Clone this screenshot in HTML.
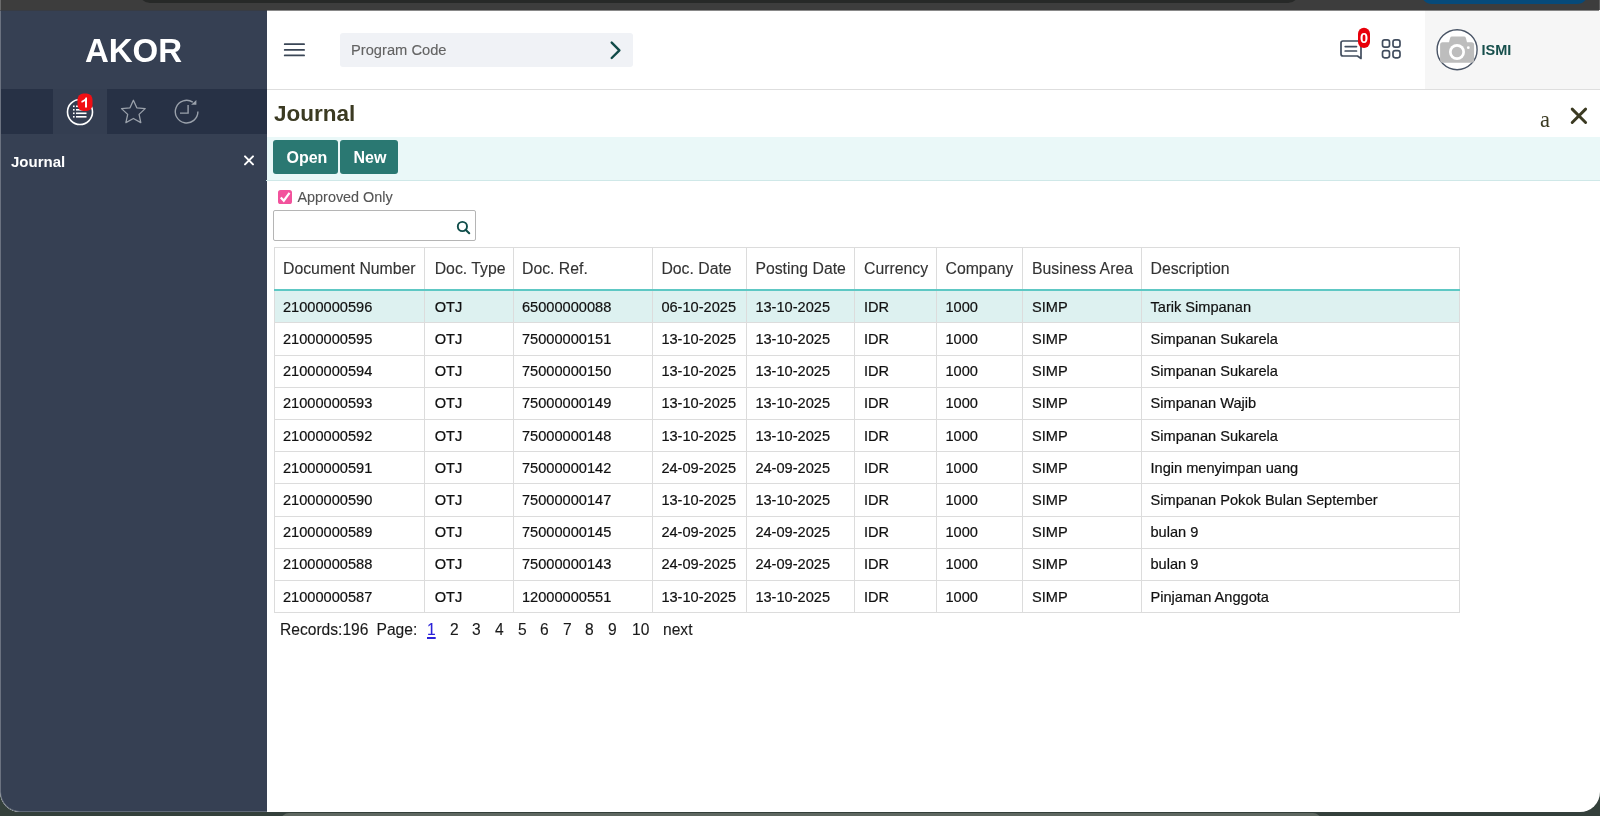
<!DOCTYPE html>
<html><head><meta charset="utf-8">
<style>
*{box-sizing:border-box;margin:0;padding:0}
html,body{width:1600px;height:816px;overflow:hidden;background:#34403b;font-family:"Liberation Sans",sans-serif}
div,svg{position:absolute}
.t{white-space:nowrap;line-height:1}
.s{-webkit-text-stroke:0.2px currentColor}
.s2{-webkit-text-stroke:0.12px currentColor}
svg text{font-family:"Liberation Sans",sans-serif}
</style></head><body>

<div style="left:281px;top:813px;width:1040px;height:10px;background:#5e6760;border-radius:8px 8px 0 0"></div>
<div style="left:0;top:0;width:1600px;height:11px;background:#3d3d3d"></div>
<div style="left:139px;top:-12px;width:1160px;height:15px;background:#272928;border-radius:0 0 11px 11px"></div>
<div style="left:1421px;top:-11.5px;width:167px;height:15px;background:#064a7a;border-radius:0 0 11px 11px"></div>
<div style="left:1599px;top:0;width:1px;height:11px;background:#5e5e5e"></div>
<div style="left:0;top:0;width:1px;height:11px;background:#6a6a6a"></div>
<div id="win" style="left:0;top:10px;width:1600px;height:802px;background:#fff;border-radius:0 0 20px 20px;overflow:hidden;will-change:transform">
<div style="left:0;top:0;width:267px;height:802px;background:#364053;border-left:1px solid #6b7280;border-bottom:1px solid #5f6877;border-radius:0 0 0 20px"></div>
<div class="t" style="left:0px;top:24.37px;color:#fff;font-size:33px;font-weight:bold;width:267px;text-align:center;">AKOR</div>
<div style="left:1px;top:79px;width:266px;height:45px;background:#273145"></div>
<div style="left:53px;top:79px;width:54px;height:45px;background:#343e51"></div>
<svg style="left:60px;top:80px" width="40" height="44" viewBox="0 0 40 44">
<circle cx="20" cy="22" r="12.5" fill="none" stroke="#fff" stroke-width="1.6"/>
<rect x="13" y="15.5" width="1.6" height="1.6" fill="#fff"/><rect x="16" y="15.5" width="10.5" height="1.6" fill="#fff"/>
<rect x="13" y="19" width="1.6" height="1.6" fill="#fff"/><rect x="16" y="19" width="10.5" height="1.6" fill="#fff"/>
<rect x="13" y="22.5" width="1.6" height="1.6" fill="#fff"/><rect x="16" y="22.5" width="10.5" height="1.6" fill="#fff"/>
<rect x="13" y="26" width="1.6" height="1.6" fill="#fff"/><rect x="16" y="26" width="10.5" height="1.6" fill="#fff"/>
<rect x="17.5" y="3.5" width="15" height="17.5" rx="6" fill="#f00f14"/>
<path d="M21.4 10.9 C23.6 10.3 25 9.3 25.6 7.6 H27 V17.6 H25 V10.9 C24.2 11.8 22.8 12.4 21.4 12.6 Z" fill="#fff"/>
</svg>
<svg style="left:119px;top:87px" width="28" height="28" viewBox="0 0 28 28">
<path d="M14.4 3.3 L17.8 10.8 L26.2 11.6 L20.1 17.4 L21.8 25.6 L14.4 21.5 L6.9 25.6 L8.7 17.4 L2.5 11.6 L11 10.8 Z" fill="none" stroke="#9aa1ab" stroke-width="1.3" stroke-linejoin="round"/>
</svg>
<svg style="left:172px;top:87px" width="30" height="30" viewBox="0 0 30 30">
<path d="M25.9 14.6 A11.3 11.3 0 1 1 20.8 5.2" fill="none" stroke="#9aa1ab" stroke-width="1.4"/>
<path d="M19.1 7.8 L24.4 2.9 L24.4 7.8 Z" fill="#9aa1ab"/>
<path d="M16.1 8 V16.1 H8" fill="none" stroke="#9aa1ab" stroke-width="1.4"/>
</svg>
<div class="t" style="left:11px;top:144.30px;color:#fff;font-size:15px;font-weight:bold;">Journal</div>
<svg style="left:243px;top:144px" width="12" height="12" viewBox="0 0 12 12"><path d="M2 2.4 L10 10.4 M10 2.4 L2 10.4" stroke="#fff" stroke-width="2" stroke-linecap="round"/></svg>
<div style="left:267px;top:79px;width:1333px;height:1px;background:#dedede"></div>
<div style="left:1425px;top:0;width:175px;height:79px;background:#f6f6f6"></div>
<svg style="left:283px;top:32px" width="24" height="16" viewBox="0 0 24 16">
<path d="M1.7 2.2 H21.1 M1.7 7.9 H21.1 M1.7 13.4 H21.1" stroke="#3a4656" stroke-width="1.75" stroke-linecap="round"/></svg>
<div style="left:340px;top:23px;width:293px;height:34px;background:#f0f2f6;border-radius:3px"></div>
<div class="t s2" style="left:351px;top:32.86px;color:#636363;font-size:14.7px;">Program Code</div>
<svg style="left:607px;top:30px" width="16" height="20" viewBox="0 0 16 20">
<path d="M4.7 2.6 L12.4 10.3 L4.7 18" fill="none" stroke="#114a48" stroke-width="2.4" stroke-linecap="round" stroke-linejoin="round"/></svg>
<svg style="left:1338px;top:28px" width="26" height="24" viewBox="0 0 26 24">
<path d="M5 3 H21 A2 2 0 0 1 23 5 V20.5 L19.5 18 H5 A2 2 0 0 1 3 16 V5 A2 2 0 0 1 5 3 Z" fill="none" stroke="#414d5e" stroke-width="1.7" stroke-linejoin="round"/>
<path d="M7.2 8.6 H18.5 M7.2 13 H18.5" stroke="#414d5e" stroke-width="1.7" stroke-linecap="round"/></svg>
<svg style="left:1357px;top:17px" width="14" height="22" viewBox="0 0 14 22">
<rect x="1" y="0.7" width="12" height="20.3" rx="6" fill="#e8000a"/>
<text x="7" y="16" font-weight="bold" font-size="14.5" fill="#fff" text-anchor="middle">0</text></svg>
<svg style="left:1380px;top:28px" width="22" height="22" viewBox="0 0 22 22">
<rect x="2.5" y="1.9" width="7" height="7.2" rx="2.2" fill="none" stroke="#414d5e" stroke-width="1.7"/>
<rect x="13" y="1.9" width="7" height="7.2" rx="2.2" fill="none" stroke="#414d5e" stroke-width="1.7"/>
<rect x="2.5" y="12.6" width="7" height="7.2" rx="2.2" fill="none" stroke="#414d5e" stroke-width="1.7"/>
<rect x="13" y="12.6" width="7" height="7.2" rx="2.2" fill="none" stroke="#414d5e" stroke-width="1.7"/></svg>
<svg style="left:1435px;top:18px" width="44" height="44" viewBox="0 0 44 44">
<circle cx="22.1" cy="21.7" r="20" fill="#fff" stroke="#4a5566" stroke-width="1.4"/>
<path d="M17 8.6 H29 A2 2 0 0 1 30.9 10 L32 14.2 H36.6 A2.5 2.5 0 0 1 39.1 16.7 V32.2 A2.5 2.5 0 0 1 36.6 34.7 H7.6 A2.5 2.5 0 0 1 5.1 32.2 V16.7 A2.5 2.5 0 0 1 7.6 14.2 H14 L15.1 10 A2 2 0 0 1 17 8.6 Z" fill="#bdbdbd"/>
<circle cx="22" cy="24" r="8" fill="#fff"/><circle cx="22" cy="24" r="5.3" fill="#bdbdbd"/>
<circle cx="33.3" cy="19.7" r="1.4" fill="#fff"/></svg>
<div class="t" style="left:1481.5px;top:32.93px;color:#174f4c;font-size:14.5px;font-weight:bold;">ISMI</div>
<div class="t" style="left:274px;top:93.45px;color:#3b3a22;font-size:22.5px;font-weight:bold;">Journal</div>
<div class="t" style="left:1540px;top:99.16px;color:#3b3a22;font-size:22.5px;font-family:'Liberation Serif',serif;">a</div>
<svg style="left:1568px;top:95px" width="22" height="22" viewBox="0 0 22 22">
<path d="M4.2 4.1 L17.6 17.5 M17.6 4.1 L4.2 17.5" stroke="#3b3a22" stroke-width="2.9" stroke-linecap="round"/></svg>
<div style="left:267px;top:127px;width:1333px;height:43px;background:#eaf8f8"></div>
<div style="left:266px;top:170px;width:1334px;height:1px;background:#cfe8e8"></div>
<div style="left:273px;top:130px;width:64.5px;height:34px;background:#2a7872;border-radius:3px"></div>
<div style="left:340px;top:130px;width:57.6px;height:34px;background:#2a7872;border-radius:3px"></div>
<div class="t" style="left:286.5px;top:140.06px;color:#fff;font-size:16px;font-weight:bold;">Open</div>
<div class="t" style="left:353.5px;top:140.06px;color:#fff;font-size:16px;font-weight:bold;">New</div>
<svg style="left:277px;top:179px" width="16" height="16" viewBox="0 0 16 16">
<rect x="1" y="1" width="14" height="14" rx="2.6" fill="#f2529c"/>
<path d="M3.8 8.4 L6.8 11.7 L12.5 3.8" fill="none" stroke="#fff" stroke-width="2.2"/></svg>
<div class="t s2" style="left:297.5px;top:179.81px;color:#555;font-size:14.4px;">Approved Only</div>
<div style="left:273px;top:200px;width:203px;height:30.5px;border:1px solid #b5b5b5;border-radius:2px;background:#fff"></div>
<svg style="left:455px;top:209px" width="18" height="18" viewBox="0 0 18 18">
<circle cx="7.4" cy="7.5" r="4.6" fill="none" stroke="#0f4d4a" stroke-width="1.9"/>
<path d="M10.6 10.8 L14.2 14.2" stroke="#0f4d4a" stroke-width="2.1" stroke-linecap="round"/></svg>
<div style="left:274px;top:281px;width:1186px;height:31px;background:#ddf1f0"></div>
<div style="left:274px;top:237px;width:1186px;height:1px;background:#dcdcdc"></div>
<div style="left:274px;top:312px;width:1186px;height:1px;background:#dcdcdc"></div>
<div style="left:274px;top:345px;width:1186px;height:1px;background:#dcdcdc"></div>
<div style="left:274px;top:377px;width:1186px;height:1px;background:#dcdcdc"></div>
<div style="left:274px;top:409px;width:1186px;height:1px;background:#dcdcdc"></div>
<div style="left:274px;top:441px;width:1186px;height:1px;background:#dcdcdc"></div>
<div style="left:274px;top:473px;width:1186px;height:1px;background:#dcdcdc"></div>
<div style="left:274px;top:506px;width:1186px;height:1px;background:#dcdcdc"></div>
<div style="left:274px;top:538px;width:1186px;height:1px;background:#dcdcdc"></div>
<div style="left:274px;top:570px;width:1186px;height:1px;background:#dcdcdc"></div>
<div style="left:274px;top:602px;width:1186px;height:1px;background:#dcdcdc"></div>
<div style="left:274px;top:237px;width:1px;height:366px;background:#dcdcdc"></div>
<div style="left:424px;top:237px;width:1px;height:366px;background:#dcdcdc"></div>
<div style="left:513px;top:237px;width:1px;height:366px;background:#dcdcdc"></div>
<div style="left:652px;top:237px;width:1px;height:366px;background:#dcdcdc"></div>
<div style="left:746px;top:237px;width:1px;height:366px;background:#dcdcdc"></div>
<div style="left:854px;top:237px;width:1px;height:366px;background:#dcdcdc"></div>
<div style="left:936px;top:237px;width:1px;height:366px;background:#dcdcdc"></div>
<div style="left:1022px;top:237px;width:1px;height:366px;background:#dcdcdc"></div>
<div style="left:1141px;top:237px;width:1px;height:366px;background:#dcdcdc"></div>
<div style="left:1459px;top:237px;width:1px;height:366px;background:#dcdcdc"></div>
<div style="left:274px;top:279px;width:1186px;height:2px;background:#5ec8c4"></div>
<div class="t s2" style="left:283px;top:251.23px;color:#333;font-size:15.8px;">Document Number</div>
<div class="t s2" style="left:434.7px;top:251.23px;color:#333;font-size:15.8px;">Doc. Type</div>
<div class="t s2" style="left:522px;top:251.23px;color:#333;font-size:15.8px;">Doc. Ref.</div>
<div class="t s2" style="left:661.4px;top:251.23px;color:#333;font-size:15.8px;">Doc. Date</div>
<div class="t s2" style="left:755.4px;top:251.23px;color:#333;font-size:15.8px;">Posting Date</div>
<div class="t s2" style="left:864px;top:251.23px;color:#333;font-size:15.8px;">Currency</div>
<div class="t s2" style="left:945.5px;top:251.23px;color:#333;font-size:15.8px;">Company</div>
<div class="t s2" style="left:1032px;top:251.23px;color:#333;font-size:15.8px;">Business Area</div>
<div class="t s2" style="left:1150.5px;top:251.23px;color:#333;font-size:15.8px;">Description</div>
<div class="t s" style="left:283px;top:289.64px;color:#111;font-size:14.6px;">21000000596</div>
<div class="t s" style="left:434.7px;top:289.64px;color:#111;font-size:14.6px;">OTJ</div>
<div class="t s" style="left:522px;top:289.64px;color:#111;font-size:14.6px;">65000000088</div>
<div class="t s" style="left:661.4px;top:289.64px;color:#111;font-size:14.6px;">06-10-2025</div>
<div class="t s" style="left:755.4px;top:289.64px;color:#111;font-size:14.6px;">13-10-2025</div>
<div class="t s" style="left:864px;top:289.64px;color:#111;font-size:14.6px;">IDR</div>
<div class="t s" style="left:945.5px;top:289.64px;color:#111;font-size:14.6px;">1000</div>
<div class="t s" style="left:1032px;top:289.64px;color:#111;font-size:14.6px;">SIMP</div>
<div class="t s" style="left:1150.5px;top:289.64px;color:#111;font-size:14.6px;">Tarik Simpanan</div>
<div class="t s" style="left:283px;top:321.64px;color:#111;font-size:14.6px;">21000000595</div>
<div class="t s" style="left:434.7px;top:321.64px;color:#111;font-size:14.6px;">OTJ</div>
<div class="t s" style="left:522px;top:321.64px;color:#111;font-size:14.6px;">75000000151</div>
<div class="t s" style="left:661.4px;top:321.64px;color:#111;font-size:14.6px;">13-10-2025</div>
<div class="t s" style="left:755.4px;top:321.64px;color:#111;font-size:14.6px;">13-10-2025</div>
<div class="t s" style="left:864px;top:321.64px;color:#111;font-size:14.6px;">IDR</div>
<div class="t s" style="left:945.5px;top:321.64px;color:#111;font-size:14.6px;">1000</div>
<div class="t s" style="left:1032px;top:321.64px;color:#111;font-size:14.6px;">SIMP</div>
<div class="t s" style="left:1150.5px;top:321.64px;color:#111;font-size:14.6px;">Simpanan Sukarela</div>
<div class="t s" style="left:283px;top:354.14px;color:#111;font-size:14.6px;">21000000594</div>
<div class="t s" style="left:434.7px;top:354.14px;color:#111;font-size:14.6px;">OTJ</div>
<div class="t s" style="left:522px;top:354.14px;color:#111;font-size:14.6px;">75000000150</div>
<div class="t s" style="left:661.4px;top:354.14px;color:#111;font-size:14.6px;">13-10-2025</div>
<div class="t s" style="left:755.4px;top:354.14px;color:#111;font-size:14.6px;">13-10-2025</div>
<div class="t s" style="left:864px;top:354.14px;color:#111;font-size:14.6px;">IDR</div>
<div class="t s" style="left:945.5px;top:354.14px;color:#111;font-size:14.6px;">1000</div>
<div class="t s" style="left:1032px;top:354.14px;color:#111;font-size:14.6px;">SIMP</div>
<div class="t s" style="left:1150.5px;top:354.14px;color:#111;font-size:14.6px;">Simpanan Sukarela</div>
<div class="t s" style="left:283px;top:386.14px;color:#111;font-size:14.6px;">21000000593</div>
<div class="t s" style="left:434.7px;top:386.14px;color:#111;font-size:14.6px;">OTJ</div>
<div class="t s" style="left:522px;top:386.14px;color:#111;font-size:14.6px;">75000000149</div>
<div class="t s" style="left:661.4px;top:386.14px;color:#111;font-size:14.6px;">13-10-2025</div>
<div class="t s" style="left:755.4px;top:386.14px;color:#111;font-size:14.6px;">13-10-2025</div>
<div class="t s" style="left:864px;top:386.14px;color:#111;font-size:14.6px;">IDR</div>
<div class="t s" style="left:945.5px;top:386.14px;color:#111;font-size:14.6px;">1000</div>
<div class="t s" style="left:1032px;top:386.14px;color:#111;font-size:14.6px;">SIMP</div>
<div class="t s" style="left:1150.5px;top:386.14px;color:#111;font-size:14.6px;">Simpanan Wajib</div>
<div class="t s" style="left:283px;top:418.64px;color:#111;font-size:14.6px;">21000000592</div>
<div class="t s" style="left:434.7px;top:418.64px;color:#111;font-size:14.6px;">OTJ</div>
<div class="t s" style="left:522px;top:418.64px;color:#111;font-size:14.6px;">75000000148</div>
<div class="t s" style="left:661.4px;top:418.64px;color:#111;font-size:14.6px;">13-10-2025</div>
<div class="t s" style="left:755.4px;top:418.64px;color:#111;font-size:14.6px;">13-10-2025</div>
<div class="t s" style="left:864px;top:418.64px;color:#111;font-size:14.6px;">IDR</div>
<div class="t s" style="left:945.5px;top:418.64px;color:#111;font-size:14.6px;">1000</div>
<div class="t s" style="left:1032px;top:418.64px;color:#111;font-size:14.6px;">SIMP</div>
<div class="t s" style="left:1150.5px;top:418.64px;color:#111;font-size:14.6px;">Simpanan Sukarela</div>
<div class="t s" style="left:283px;top:450.64px;color:#111;font-size:14.6px;">21000000591</div>
<div class="t s" style="left:434.7px;top:450.64px;color:#111;font-size:14.6px;">OTJ</div>
<div class="t s" style="left:522px;top:450.64px;color:#111;font-size:14.6px;">75000000142</div>
<div class="t s" style="left:661.4px;top:450.64px;color:#111;font-size:14.6px;">24-09-2025</div>
<div class="t s" style="left:755.4px;top:450.64px;color:#111;font-size:14.6px;">24-09-2025</div>
<div class="t s" style="left:864px;top:450.64px;color:#111;font-size:14.6px;">IDR</div>
<div class="t s" style="left:945.5px;top:450.64px;color:#111;font-size:14.6px;">1000</div>
<div class="t s" style="left:1032px;top:450.64px;color:#111;font-size:14.6px;">SIMP</div>
<div class="t s" style="left:1150.5px;top:450.64px;color:#111;font-size:14.6px;">Ingin menyimpan uang</div>
<div class="t s" style="left:283px;top:482.64px;color:#111;font-size:14.6px;">21000000590</div>
<div class="t s" style="left:434.7px;top:482.64px;color:#111;font-size:14.6px;">OTJ</div>
<div class="t s" style="left:522px;top:482.64px;color:#111;font-size:14.6px;">75000000147</div>
<div class="t s" style="left:661.4px;top:482.64px;color:#111;font-size:14.6px;">13-10-2025</div>
<div class="t s" style="left:755.4px;top:482.64px;color:#111;font-size:14.6px;">13-10-2025</div>
<div class="t s" style="left:864px;top:482.64px;color:#111;font-size:14.6px;">IDR</div>
<div class="t s" style="left:945.5px;top:482.64px;color:#111;font-size:14.6px;">1000</div>
<div class="t s" style="left:1032px;top:482.64px;color:#111;font-size:14.6px;">SIMP</div>
<div class="t s" style="left:1150.5px;top:482.64px;color:#111;font-size:14.6px;">Simpanan Pokok Bulan September</div>
<div class="t s" style="left:283px;top:515.14px;color:#111;font-size:14.6px;">21000000589</div>
<div class="t s" style="left:434.7px;top:515.14px;color:#111;font-size:14.6px;">OTJ</div>
<div class="t s" style="left:522px;top:515.14px;color:#111;font-size:14.6px;">75000000145</div>
<div class="t s" style="left:661.4px;top:515.14px;color:#111;font-size:14.6px;">24-09-2025</div>
<div class="t s" style="left:755.4px;top:515.14px;color:#111;font-size:14.6px;">24-09-2025</div>
<div class="t s" style="left:864px;top:515.14px;color:#111;font-size:14.6px;">IDR</div>
<div class="t s" style="left:945.5px;top:515.14px;color:#111;font-size:14.6px;">1000</div>
<div class="t s" style="left:1032px;top:515.14px;color:#111;font-size:14.6px;">SIMP</div>
<div class="t s" style="left:1150.5px;top:515.14px;color:#111;font-size:14.6px;">bulan 9</div>
<div class="t s" style="left:283px;top:547.14px;color:#111;font-size:14.6px;">21000000588</div>
<div class="t s" style="left:434.7px;top:547.14px;color:#111;font-size:14.6px;">OTJ</div>
<div class="t s" style="left:522px;top:547.14px;color:#111;font-size:14.6px;">75000000143</div>
<div class="t s" style="left:661.4px;top:547.14px;color:#111;font-size:14.6px;">24-09-2025</div>
<div class="t s" style="left:755.4px;top:547.14px;color:#111;font-size:14.6px;">24-09-2025</div>
<div class="t s" style="left:864px;top:547.14px;color:#111;font-size:14.6px;">IDR</div>
<div class="t s" style="left:945.5px;top:547.14px;color:#111;font-size:14.6px;">1000</div>
<div class="t s" style="left:1032px;top:547.14px;color:#111;font-size:14.6px;">SIMP</div>
<div class="t s" style="left:1150.5px;top:547.14px;color:#111;font-size:14.6px;">bulan 9</div>
<div class="t s" style="left:283px;top:579.64px;color:#111;font-size:14.6px;">21000000587</div>
<div class="t s" style="left:434.7px;top:579.64px;color:#111;font-size:14.6px;">OTJ</div>
<div class="t s" style="left:522px;top:579.64px;color:#111;font-size:14.6px;">12000000551</div>
<div class="t s" style="left:661.4px;top:579.64px;color:#111;font-size:14.6px;">13-10-2025</div>
<div class="t s" style="left:755.4px;top:579.64px;color:#111;font-size:14.6px;">13-10-2025</div>
<div class="t s" style="left:864px;top:579.64px;color:#111;font-size:14.6px;">IDR</div>
<div class="t s" style="left:945.5px;top:579.64px;color:#111;font-size:14.6px;">1000</div>
<div class="t s" style="left:1032px;top:579.64px;color:#111;font-size:14.6px;">SIMP</div>
<div class="t s" style="left:1150.5px;top:579.64px;color:#111;font-size:14.6px;">Pinjaman Anggota</div>
<div class="t s2" style="left:280px;top:612.49px;color:#1a1a1a;font-size:15.6px;">Records:196</div>
<div class="t s2" style="left:376.5px;top:612.49px;color:#1a1a1a;font-size:15.6px;">Page:</div>
<div class="t s2" style="left:427px;top:612.49px;color:#2b22d8;font-size:15.6px;text-decoration:underline;text-underline-offset:2px;text-decoration-thickness:1.6px;">1</div>
<div class="t s2" style="left:450px;top:612.49px;color:#1a1a1a;font-size:15.6px;">2</div>
<div class="t s2" style="left:472px;top:612.49px;color:#1a1a1a;font-size:15.6px;">3</div>
<div class="t s2" style="left:495px;top:612.49px;color:#1a1a1a;font-size:15.6px;">4</div>
<div class="t s2" style="left:518px;top:612.49px;color:#1a1a1a;font-size:15.6px;">5</div>
<div class="t s2" style="left:540px;top:612.49px;color:#1a1a1a;font-size:15.6px;">6</div>
<div class="t s2" style="left:563px;top:612.49px;color:#1a1a1a;font-size:15.6px;">7</div>
<div class="t s2" style="left:585px;top:612.49px;color:#1a1a1a;font-size:15.6px;">8</div>
<div class="t s2" style="left:608px;top:612.49px;color:#1a1a1a;font-size:15.6px;">9</div>
<div class="t s2" style="left:632px;top:612.49px;color:#1a1a1a;font-size:15.6px;">10</div>
<div class="t s2" style="left:663px;top:612.49px;color:#1a1a1a;font-size:15.6px;">next</div>
</div>
<div style="left:0;top:10px;width:1599px;height:1px;background:rgba(58,58,58,0.6)"></div>
</body></html>
